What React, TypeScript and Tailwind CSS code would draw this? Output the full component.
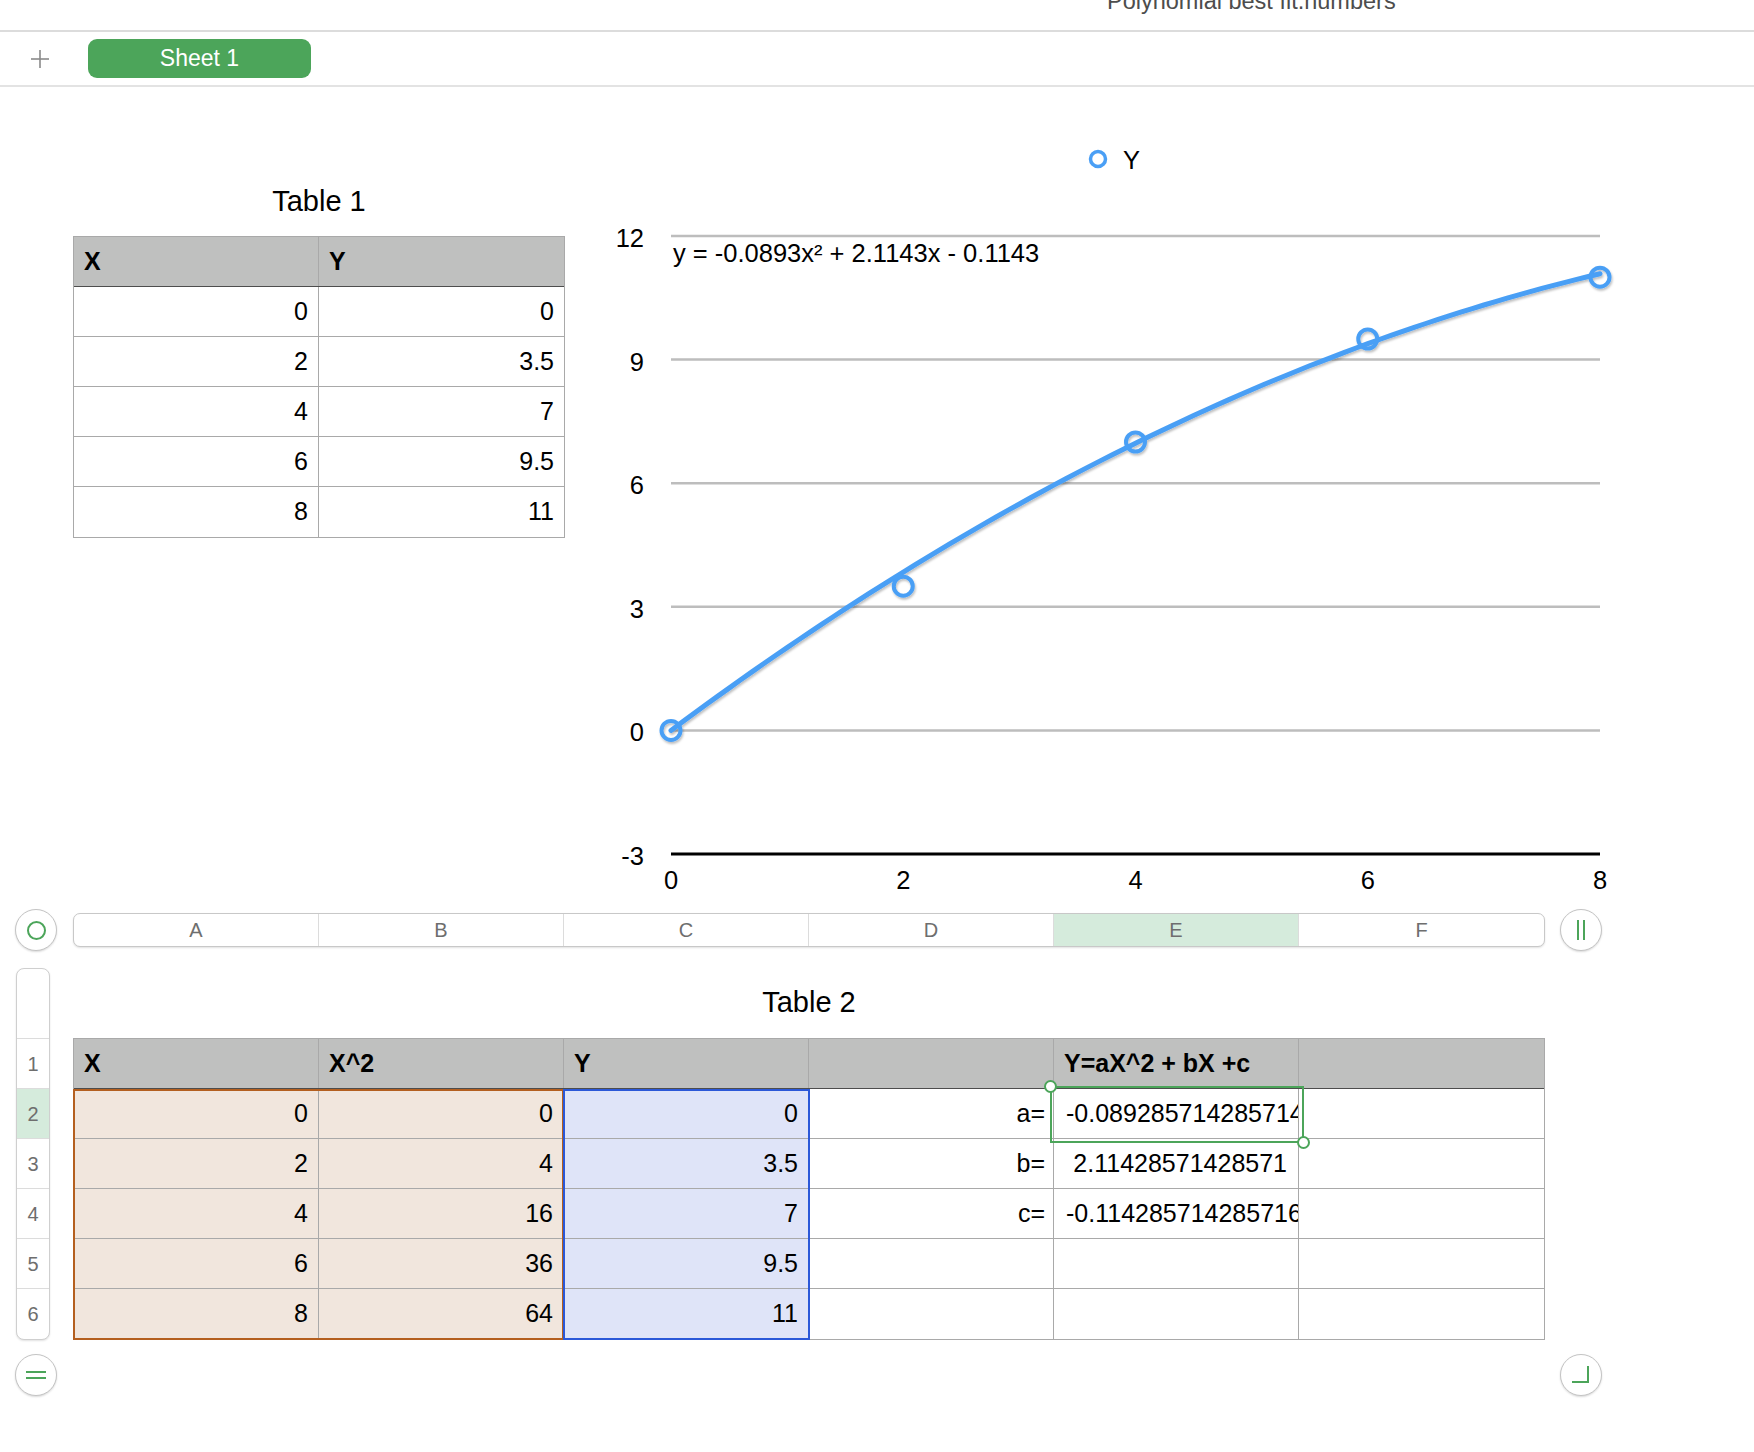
import React from "react";

const BLUE = "#4a9ff5";

function xPos(u: number) {
  return 671 + u * 116.125;
}
function yPos(v: number) {
  return 236 + (12 - v) * 41.2;
}

function Chart() {
  const pts: [number, number][] = [
    [0, 0],
    [2, 3.5],
    [4, 7],
    [6, 9.5],
    [8, 11],
  ];
  const curve: string[] = [];
  for (let i = 0; i <= 80; i++) {
    const u = i / 10;
    const v = -0.0893 * u * u + 2.1143 * u - 0.1143 + 0.1143 * (1 - u / 8);
    curve.push(`${xPos(u).toFixed(1)},${yPos(v).toFixed(1)}`);
  }
  const ticks = [12, 9, 6, 3, 0];
  return (
    <svg
      width={1100}
      height={822}
      viewBox="565 87 1100 822"
      className="shrink-0"
      style={{ fontFamily: '"Liberation Sans", Arial, sans-serif' }}
    >
      <defs>
        <filter id="sh" x="-10%" y="-10%" width="120%" height="130%">
          <feDropShadow dx="1" dy="2" stdDeviation="1.2" floodColor="#000" floodOpacity="0.25" />
        </filter>
      </defs>
      {/* legend */}
      <circle cx={1098} cy={159} r={7.5} fill="white" stroke={BLUE} strokeWidth={3.5} />
      <text x={1123} y={160} fontSize={25.5} dominantBaseline="central" fill="#000">
        Y
      </text>
      {/* grid */}
      {ticks.map((t) => (
        <g key={t}>
          <line x1={671} x2={1600} y1={yPos(t)} y2={yPos(t)} stroke="#bdbdbd" strokeWidth={2.5} />
          <text
            x={644}
            y={yPos(t) + 2}
            fontSize={25.5}
            textAnchor="end"
            dominantBaseline="central"
            fill="#000"
          >
            {t}
          </text>
        </g>
      ))}
      <line x1={671} x2={1600} y1={yPos(-3)} y2={yPos(-3)} stroke="#000" strokeWidth={3} />
      <text x={644} y={yPos(-3) + 2} fontSize={25.5} textAnchor="end" dominantBaseline="central" fill="#000">
        -3
      </text>
      {[0, 2, 4, 6, 8].map((u) => (
        <text key={u} x={xPos(u)} y={880} fontSize={25.5} textAnchor="middle" dominantBaseline="central" fill="#000">
          {u}
        </text>
      ))}
      <text x={673} y={253} fontSize={25.5} dominantBaseline="central" fill="#000">
        y = -0.0893x² + 2.1143x - 0.1143
      </text>
      <g filter="url(#sh)">
        <polyline points={curve.join(" ")} fill="none" stroke={BLUE} strokeWidth={5} strokeLinecap="round" />
        {pts.map(([u, v]) => (
          <circle key={u} cx={xPos(u)} cy={yPos(v)} r={9.5} fill="none" stroke={BLUE} strokeWidth={4} />
        ))}
      </g>
    </svg>
  );
}

function Table1() {
  const rows = [
    ["0", "0"],
    ["2", "3.5"],
    ["4", "7"],
    ["6", "9.5"],
    ["8", "11"],
  ];
  return (
    <div className="w-[492px] border border-[#a9a9a9]">
      <div className="flex h-[50px] bg-[#bfc0bf] border-b border-[#4d4d4d]">
        <div className="w-[245px] border-r border-[#a9a9a9] flex items-center px-[10px] font-bold">X</div>
        <div className="w-[245px] flex items-center px-[10px] font-bold">Y</div>
      </div>
      {rows.map((r, i) => (
        <div
          key={i}
          className={`flex h-[50px] bg-white ${i < rows.length - 1 ? "border-b border-[#a9a9a9]" : ""}`}
        >
          <div className="w-[245px] border-r border-[#a9a9a9] flex items-center justify-end px-[10px]">{r[0]}</div>
          <div className="w-[245px] flex items-center justify-end px-[10px]">{r[1]}</div>
        </div>
      ))}
    </div>
  );
}

function Table2() {
  const data = [
    ["0", "0", "0", "a=", "-0.0892857142857142"],
    ["2", "4", "3.5", "b=", "2.11428571428571"],
    ["4", "16", "7", "c=", "-0.114285714285716"],
    ["6", "36", "9.5", "", ""],
    ["8", "64", "11", "", ""],
  ];
  const headers = ["X", "X^2", "Y", "", "Y=aX^2 + bX +c", ""];
  return (
    <div className="relative w-[1472px] border border-[#a9a9a9]">
      <div className="flex h-[50px] bg-[#bfc0bf] border-b border-[#4d4d4d]">
        {headers.map((h, i) => (
          <div
            key={i}
            className={`w-[245px] shrink-0 flex items-center px-[10px] font-bold whitespace-nowrap ${
              i < 5 ? "border-r border-[#a9a9a9]" : ""
            }`}
          >
            {h}
          </div>
        ))}
      </div>
      {data.map((r, i) => (
        <div key={i} className={`flex h-[50px] ${i < data.length - 1 ? "border-b border-[#a9a9a9]" : ""}`}>
          <div className="w-[245px] shrink-0 border-r border-[#a9a9a9] bg-[#f1e6dd] flex items-center justify-end px-[10px]">
            {r[0]}
          </div>
          <div className="w-[245px] shrink-0 border-r border-[#a9a9a9] bg-[#f1e6dd] flex items-center justify-end px-[10px]">
            {r[1]}
          </div>
          <div className="w-[245px] shrink-0 border-r border-[#a9a9a9] bg-[#dfe4f8] flex items-center justify-end px-[10px]">
            {r[2]}
          </div>
          <div className="w-[245px] shrink-0 border-r border-[#a9a9a9] bg-white flex items-center justify-end px-[8px]">
            {r[3]}
          </div>
          <div
            className={`w-[245px] shrink-0 border-r border-[#a9a9a9] bg-white flex items-center overflow-hidden whitespace-nowrap ${
              i === 1 ? "justify-end pr-[11px]" : "pl-[12px]"
            }`}
          >
            {r[4]}
          </div>
          <div className="w-[245px] shrink-0 bg-white" />
        </div>
      ))}
      {/* range highlights */}
      <div className="absolute left-[-1px] top-[50px] w-[491px] h-[251px] border-2 border-[#b45f1f] pointer-events-none" />
      <div className="absolute left-[489px] top-[50px] w-[247px] h-[251px] border-2 border-[#2b58d8] pointer-events-none" />
      {/* selection */}
      <div className="absolute left-[976px] top-[47px] w-[254px] h-[57px] border-2 border-[#4ca55a] pointer-events-none" />
      <div className="absolute left-[970px] top-[41px] w-[13px] h-[13px] rounded-full border-2 border-[#4ca55a] bg-white" />
      <div className="absolute left-[1223px] top-[97px] w-[13px] h-[13px] rounded-full border-2 border-[#4ca55a] bg-white" />
    </div>
  );
}

function RoundBtn({ children }: { children: React.ReactNode }) {
  return (
    <div className="w-[42px] h-[42px] shrink-0 rounded-full border border-[#c4c4c4] bg-white shadow-[0_1px_2px_rgba(0,0,0,0.15)] flex items-center justify-center">
      {children}
    </div>
  );
}

export default function App() {
  const cols = ["A", "B", "C", "D", "E", "F"];
  return (
    <div
      className="w-[1754px] h-[1452px] bg-white overflow-hidden text-black text-[25px]"
      style={{ fontFamily: '"Liberation Sans", Arial, sans-serif' }}
    >
      {/* title bar */}
      <div className="h-[32px] border-b-2 border-[#dcdcdc] overflow-hidden">
        <div className="pl-[1107px] -mt-[10px] text-[23.5px] leading-none text-[#4d4d4d] whitespace-nowrap">
          Polynomial best fit.numbers
        </div>
      </div>
      {/* sheet tabs */}
      <div className="h-[55px] border-b-2 border-[#e3e3e3] flex items-center">
        <svg width={20} height={20} viewBox="0 0 20 20" className="ml-[30px]">
          <line x1={10} y1={1} x2={10} y2={19} stroke="#8a8a8a" strokeWidth={1.6} />
          <line x1={1} y1={10} x2={19} y2={10} stroke="#8a8a8a" strokeWidth={1.6} />
        </svg>
        <div className="ml-[38px] w-[223px] h-[39px] rounded-[9px] bg-[#4ca55a] text-white text-[23px] flex items-center justify-center">
          Sheet 1
        </div>
      </div>
      {/* upper canvas */}
      <div className="h-[822px] flex items-start">
        <div className="ml-[73px] mt-[96px] shrink-0">
          <div className="h-[36px] text-center text-[29px] leading-[36px] mb-[17px]">Table 1</div>
          <Table1 />
        </div>
        <Chart />
      </div>
      {/* column header row */}
      <div className="h-[42px] flex items-center">
        <div className="ml-[15px]">
          <RoundBtn>
            <div className="w-[19px] h-[19px] rounded-full border-2 border-[#4ca55a]" />
          </RoundBtn>
        </div>
        <div className="ml-[16px] w-[1472px] h-[34px] rounded-[7px] border border-[#c8c8c8] shadow-[0_1px_2px_rgba(0,0,0,0.12)] flex overflow-hidden bg-white">
          {cols.map((c, i) => (
            <div
              key={c}
              className={`w-[245px] shrink-0 flex items-center justify-center text-[20px] text-[#6e6e6e] ${
                i < 5 ? "border-r border-[#dcdcdc]" : ""
              } ${c === "E" ? "bg-[#d5ebdc]" : ""}`}
            >
              {c}
            </div>
          ))}
        </div>
        <div className="ml-[15px]">
          <RoundBtn>
            <div className="flex gap-[4px]">
              <div className="w-[2px] h-[20px] bg-[#4ca55a]" />
              <div className="w-[2px] h-[20px] bg-[#4ca55a]" />
            </div>
          </RoundBtn>
        </div>
      </div>
      {/* lower canvas */}
      <div className="mt-[17px] flex items-start">
        <div className="ml-[16px] w-[34px] rounded-[8px] border border-[#cfcfcf] overflow-hidden shadow-[0_1px_2px_rgba(0,0,0,0.12)] bg-white">
          <div className="h-[70px] border-b border-[#dcdcdc]" />
          {[1, 2, 3, 4, 5, 6].map((n) => (
            <div
              key={n}
              className={`h-[50px] flex items-center justify-center text-[20px] text-[#6e6e6e] ${
                n < 6 ? "border-b border-[#dcdcdc]" : ""
              } ${n === 2 ? "bg-[#d5ebdc]" : ""}`}
            >
              {n}
            </div>
          ))}
        </div>
        <div className="ml-[23px]">
          <div className="h-[70px] flex items-center justify-center text-[29px]">Table 2</div>
          <Table2 />
        </div>
      </div>
      {/* bottom buttons */}
      <div className="mt-[14px] flex items-center">
        <div className="ml-[15px]">
          <RoundBtn>
            <div className="flex flex-col gap-[4px]">
              <div className="w-[20px] h-[2px] bg-[#4ca55a]" />
              <div className="w-[20px] h-[2px] bg-[#4ca55a]" />
            </div>
          </RoundBtn>
        </div>
        <div className="ml-[1503px]">
          <RoundBtn>
            <div className="w-[17px] h-[17px] border-r-2 border-b-2 border-[#4ca55a] -mt-[2px] ml-[-2px]" />
          </RoundBtn>
        </div>
      </div>
    </div>
  );
}
